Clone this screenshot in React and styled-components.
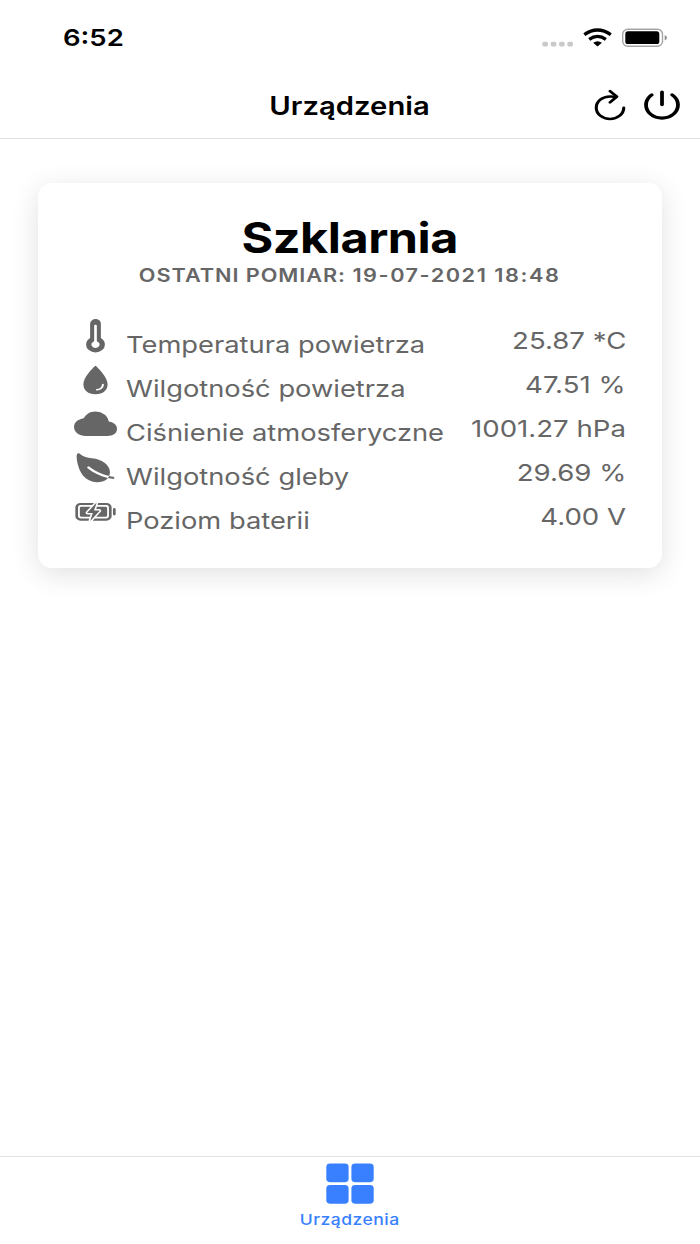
import React from 'react';
import styled, { createGlobalStyle } from 'styled-components';
import {
  IoRefreshOutline,
  IoPower,
  IoThermometer,
  IoWater,
  IoCloud,
  IoLeaf,
  IoBatteryCharging,
} from 'react-icons/io5';

const GlobalStyle = createGlobalStyle`
  *, *::before, *::after { box-sizing: border-box; }
  body { margin: 0; background: #fff; overflow: hidden; }
  svg { display: block; flex: none; }
`;

const Screen = styled.div`
  display: flex;
  flex-direction: column;
  height: 1244px;
  background: #fff;
  color: #000;
  font-family: Inter, 'Liberation Sans', sans-serif;
`;

/* The interface uses an extended letterform, so each line is widened from its anchor side. */
const Wide = styled.span`
  display: inline-block;
  white-space: nowrap;
  transform: scaleX(${(p) => p.$stretch || 1.17});
  transform-origin: ${(p) => p.$from || 'left'} center;
`;

const StatusBar = styled.div`
  display: flex;
  justify-content: space-between;
  height: 72px;
  padding: 0 33px 0 63px;
`;

const Clock = styled.div`
  padding-top: 24px;
  font-size: 23.5px;
  line-height: 28px;
  font-weight: 600;
`;

const StatusIcons = styled.div`
  display: flex;
  padding-top: 25px;
`;

const Toolbar = styled.header`
  display: grid;
  grid-template-columns: 1fr auto 1fr;
  align-items: center;
  height: 67px;
  padding: 0 16px;
  border-bottom: 1px solid #e2e2e2;
`;

const Title = styled.h1`
  grid-column: 2;
  margin: 0;
  padding-top: 1px;
  font-size: 25px;
  line-height: 32px;
  font-weight: 600;
`;

const Actions = styled.div`
  display: flex;
  justify-content: flex-end;
  gap: 8px;
`;

const IconButton = styled.button`
  padding: 0;
  border: 0;
  background: none;
  color: #000;
  svg { width: 44px; height: 36px; }
  svg path { stroke-width: ${(p) => p.$weight || 0}px; }
`;

const Content = styled.main`
  flex: 1;
  padding: 44px 38px;
`;

const Card = styled.section`
  height: 385px;
  padding: 32px 36px 0;
  border-radius: 14px;
  background: #fff;
  color: #666;
  box-shadow: 0 6px 28px rgba(0, 0, 0, 0.12);
`;

const CardTitle = styled.h2`
  margin: 0;
  color: #000;
  text-align: center;
  font-size: 42px;
  line-height: 46px;
  font-weight: 700;
  letter-spacing: -0.4px;
`;

const CardSubtitle = styled.p`
  margin: 3px 0 0;
  text-align: center;
  font-size: 18.4px;
  line-height: 22px;
  font-weight: 600;
  letter-spacing: 0.8px;
`;

const Timestamp = styled.time`
  letter-spacing: 1.3px;
`;

const Readings = styled.ul`
  margin: 31px 0 0;
  padding: 0;
  list-style: none;
`;

const Reading = styled.li`
  display: flex;
  height: 44px;
  font-size: 23.5px;
  line-height: 30px;
  > svg { width: 43px; height: 35.5px; margin: 1px 9px 0 0; }
`;

const Label = styled.span`
  flex: 1;
  padding-top: 13px;
`;

const Value = styled.span`
  padding-top: 9px;
  text-align: right;
`;

const TabBar = styled.nav`
  display: flex;
  justify-content: center;
  height: 88px;
  border-top: 1px solid #e2e2e2;
`;

const Tab = styled.a`
  display: flex;
  flex-direction: column;
  align-items: center;
  padding-top: 6px;
  color: #3880ff;
`;

const TabLabel = styled.span`
  margin-top: 6px;
  font-size: 15px;
  line-height: 20px;
  font-weight: 500;
  letter-spacing: 0.4px;
`;

function SystemStatus() {
  return (
    <svg width="126" height="26" viewBox="541 25 126 26">
      <g fill="#c9c9c9">
        {[542.3, 550.7, 559, 567.3].map((x) => (
          <rect key={x} x={x} y="41.7" width="5.7" height="4.7" rx="1.7" />
        ))}
      </g>
      <g fill="none" stroke="#000" strokeWidth="3.3">
        <path d="M584.3 34.6Q597.5 25.5 610.8 34.6" />
        <path d="M589.2 39.3Q597.5 33.5 605.9 39.3" />
      </g>
      <path d="M593.2 42.8Q597.5 39.7 601.9 42.8L597.5 46.6Z" />
      <rect x="622.7" y="29.2" width="39.8" height="17" rx="5" fill="none" stroke="#a5a5a5" strokeWidth="1.4" />
      <rect x="625.3" y="31.3" width="34" height="12.8" rx="2.6" />
      <path d="M664.7 34.9Q667 36 667 37.7T664.7 40.5Z" fill="#8e8e8e" />
    </svg>
  );
}

function GridIcon() {
  return (
    <svg width="48" height="41" viewBox="0 0 48 41" fill="currentColor">
      <rect x="0.3" y="0.5" width="22.3" height="18.7" rx="4" ry="3.4" />
      <rect x="25.4" y="0.5" width="22.3" height="18.7" rx="4" ry="3.4" />
      <rect x="0.3" y="22" width="22.3" height="18.7" rx="4" ry="3.4" />
      <rect x="25.4" y="22" width="22.3" height="18.7" rx="4" ry="3.4" />
    </svg>
  );
}

const readings = [
  { icon: IoThermometer, label: 'Temperatura powietrza', value: '25.87 *C' },
  { icon: IoWater, label: 'Wilgotność powietrza', value: '47.51 %' },
  { icon: IoCloud, label: 'Ciśnienie atmosferyczne', value: '1001.27 hPa' },
  { icon: IoLeaf, label: 'Wilgotność gleby', value: '29.69 %' },
  { icon: IoBatteryCharging, label: 'Poziom baterii', value: '4.00 V' },
];

export default function App() {
  return (
    <Screen>
      <GlobalStyle />
      <StatusBar>
        <Clock><Wide>6:52</Wide></Clock>
        <StatusIcons><SystemStatus /></StatusIcons>
      </StatusBar>
      <Toolbar>
        <Title><Wide $from="center">Urządzenia</Wide></Title>
        <Actions>
          <IconButton aria-label="Odśwież" $weight={36}><IoRefreshOutline preserveAspectRatio="none" /></IconButton>
          <IconButton aria-label="Wyloguj"><IoPower preserveAspectRatio="none" /></IconButton>
        </Actions>
      </Toolbar>
      <Content>
        <Card>
          <CardTitle><Wide $from="center" $stretch={1.155}>Szklarnia</Wide></CardTitle>
          <CardSubtitle>
            <Wide $from="center" $stretch={1.18}>
              OSTATNI POMIAR: <Timestamp>19-07-2021 18:48</Timestamp>
            </Wide>
          </CardSubtitle>
          <Readings>
            {readings.map(({ icon: Icon, label, value }) => (
              <Reading key={label}>
                <Icon preserveAspectRatio="none" />
                <Label><Wide $stretch={1.162}>{label}</Wide></Label>
                <Value><Wide $from="right" $stretch={1.174}>{value}</Wide></Value>
              </Reading>
            ))}
          </Readings>
        </Card>
      </Content>
      <TabBar>
        <Tab>
          <GridIcon />
          <TabLabel><Wide $from="center">Urządzenia</Wide></TabLabel>
        </Tab>
      </TabBar>
    </Screen>
  );
}
